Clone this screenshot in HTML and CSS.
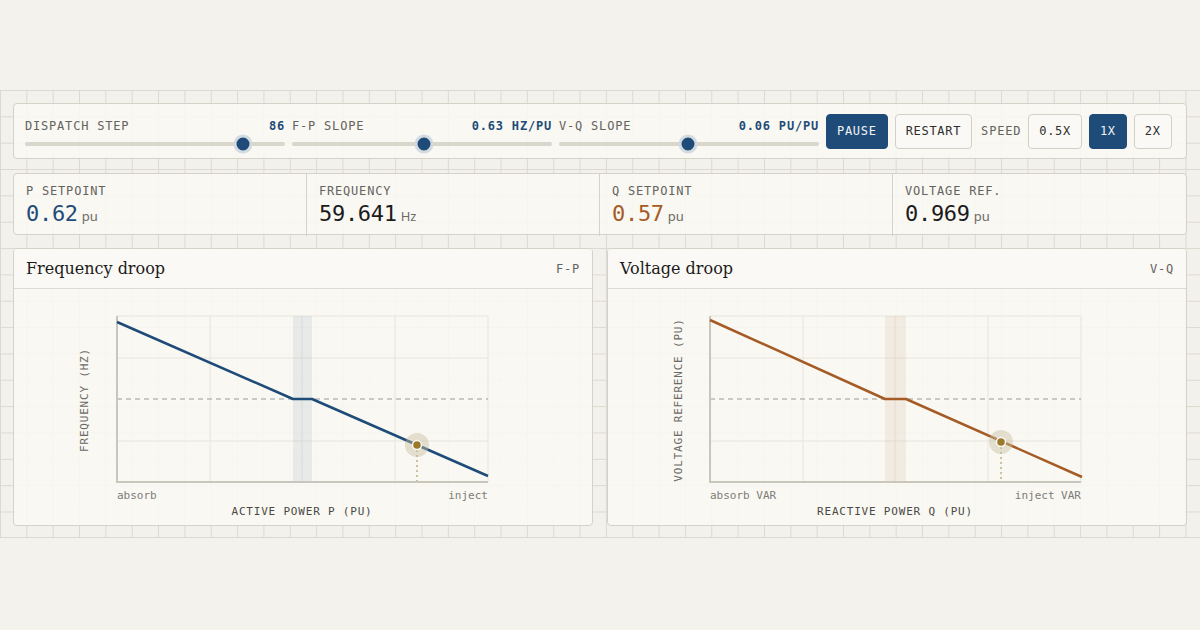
FILE: index.html
```html
<!DOCTYPE html>
<html lang="en">
<head>
    <meta charset="UTF-8">
    <meta name="viewport" content="width=device-width, initial-scale=1">
    <title>Droop Control Explorer</title>
    <link rel="stylesheet" href="styles.css">
</head>
<body>
    <div class="stage">
        <div class="panel controls">
            <div class="slider">
                <div class="slider-head">
                    <span class="label">Dispatch step</span>
                    <span class="slider-value">86</span>
                </div>
                <div class="track"><span class="thumb" style="left: 84%"></span></div>
            </div>
            <div class="slider">
                <div class="slider-head">
                    <span class="label">F-P slope</span>
                    <span class="slider-value">0.63 Hz/pu</span>
                </div>
                <div class="track"><span class="thumb" style="left: 50.8%"></span></div>
            </div>
            <div class="slider">
                <div class="slider-head">
                    <span class="label">V-Q slope</span>
                    <span class="slider-value">0.06 pu/pu</span>
                </div>
                <div class="track"><span class="thumb" style="left: 49.8%"></span></div>
            </div>
            <button class="btn primary">Pause</button>
            <button class="btn">Restart</button>
            <span class="label speed">Speed</span>
            <button class="btn">0.5x</button>
            <button class="btn primary">1x</button>
            <button class="btn">2x</button>
        </div>

        <div class="panel stats">
            <div class="stat">
                <div class="label">P setpoint</div>
                <div class="stat-value blue">0.62<span class="unit">pu</span></div>
            </div>
            <div class="stat">
                <div class="label">Frequency</div>
                <div class="stat-value">59.641<span class="unit">Hz</span></div>
            </div>
            <div class="stat">
                <div class="label">Q setpoint</div>
                <div class="stat-value orange">0.57<span class="unit">pu</span></div>
            </div>
            <div class="stat">
                <div class="label">Voltage ref.</div>
                <div class="stat-value">0.969<span class="unit">pu</span></div>
            </div>
        </div>

        <div class="charts">
            <div class="panel chart">
                <div class="chart-head">
                    <h2>Frequency droop</h2>
                    <span class="label">F-P</span>
                </div>
                <svg class="plot" viewBox="0 0 578 236" width="578" height="236">
                    <g class="gridlines">
                        <line x1="196" y1="27" x2="196" y2="193"/>
                        <line x1="288" y1="27" x2="288" y2="193"/>
                        <line x1="381" y1="27" x2="381" y2="193"/>
                        <line x1="474" y1="27" x2="474" y2="193"/>
                        <line x1="103" y1="27" x2="474" y2="27"/>
                        <line x1="103" y1="69" x2="474" y2="69"/>
                        <line x1="103" y1="152" x2="474" y2="152"/>
                    </g>
                    <rect class="band band-blue" x="279" y="27" width="19" height="166"/>
                    <line class="nominal" x1="103" y1="110" x2="474" y2="110"/>
                    <line class="axis" x1="103" y1="27" x2="103" y2="193"/>
                    <line class="axis" x1="102" y1="193" x2="474" y2="193"/>
                    <polyline class="curve curve-blue" points="103,33 279,110 298,110 474,187"/>
                    <line class="drop" x1="403" y1="156" x2="403" y2="192"/>
                    <circle class="halo" cx="403" cy="156" r="12"/>
                    <circle class="point" cx="403" cy="156" r="4.5"/>
                    <text class="axis-title" transform="translate(74 111) rotate(-90)" text-anchor="middle">FREQUENCY (HZ)</text>
                    <text class="tick" x="103" y="210">absorb</text>
                    <text class="tick" x="474" y="210" text-anchor="end">inject</text>
                    <text class="axis-title dark" x="288" y="226" text-anchor="middle">ACTIVE POWER P (PU)</text>
                </svg>
            </div>
            <div class="panel chart">
                <div class="chart-head">
                    <h2>Voltage droop</h2>
                    <span class="label">V-Q</span>
                </div>
                <svg class="plot" viewBox="0 0 577 236" width="577" height="236">
                    <g class="gridlines">
                        <line x1="195" y1="27" x2="195" y2="193"/>
                        <line x1="287" y1="27" x2="287" y2="193"/>
                        <line x1="380" y1="27" x2="380" y2="193"/>
                        <line x1="473" y1="27" x2="473" y2="193"/>
                        <line x1="102" y1="27" x2="473" y2="27"/>
                        <line x1="102" y1="69" x2="473" y2="69"/>
                        <line x1="102" y1="152" x2="473" y2="152"/>
                    </g>
                    <rect class="band band-orange" x="277" y="27" width="21" height="166"/>
                    <line class="nominal" x1="102" y1="110" x2="473" y2="110"/>
                    <line class="axis" x1="102" y1="27" x2="102" y2="193"/>
                    <line class="axis" x1="101" y1="193" x2="473" y2="193"/>
                    <polyline class="curve curve-orange" points="102,31 277,110 298,110 474,188"/>
                    <line class="drop" x1="393" y1="153" x2="393" y2="192"/>
                    <circle class="halo" cx="393" cy="153" r="12"/>
                    <circle class="point" cx="393" cy="153" r="4.5"/>
                    <text class="axis-title" transform="translate(74 111) rotate(-90)" text-anchor="middle">VOLTAGE REFERENCE (PU)</text>
                    <text class="tick" x="102" y="210">absorb VAR</text>
                    <text class="tick" x="473" y="210" text-anchor="end">inject VAR</text>
                    <text class="axis-title dark" x="287" y="226" text-anchor="middle">REACTIVE POWER Q (PU)</text>
                </svg>
            </div>
        </div>
    </div>
</body>
</html>
```

FILE: styles.css
```css
body {
    margin: 0;
    background: #f3f2ed;
    color: #1d1d1d;
    font-family: "DejaVu Sans Mono", "Liberation Mono", monospace;
}
.stage {
    margin-top: 90px;
    height: 448px;
    box-sizing: border-box;
    padding: 13px 13px 0 13px;
    display: flex;
    flex-direction: column;
    background-color: #f2f1eb;
    background-image:
        linear-gradient(to right, #dcd9cf 1px, transparent 1px),
        linear-gradient(to bottom, #dcd9cf 1px, transparent 1px);
    background-size: 26.35px 26.35px;
    border-bottom: 1px solid #dcd9cf;
}
.panel {
    background: rgba(250, 249, 245, 0.86);
    border: 1px solid #d5d2c8;
    border-radius: 4px;
}
.label {
    font-size: 12px;
    letter-spacing: 0.8px;
    text-transform: uppercase;
    color: #64635e;
}

/* control bar */
.controls {
    height: 56px;
    box-sizing: border-box;
    display: flex;
    align-items: center;
    gap: 7px;
    padding: 0 12px 0 11px;
}
.slider {
    flex: 0 0 260px;
    display: flex;
    flex-direction: column;
    gap: 9px;
    padding-top: 3px;
}
.slider-head {
    display: flex;
    justify-content: space-between;
    align-items: baseline;
}
.slider-value {
    font-size: 12px;
    font-weight: bold;
    letter-spacing: 0.8px;
    text-transform: uppercase;
    color: #1e4b78;
}
.track {
    position: relative;
    height: 4px;
    border-radius: 2px;
    background: #d9d6cb;
}
.thumb {
    position: absolute;
    top: 50%;
    width: 13px;
    height: 13px;
    border-radius: 50%;
    background: #1e4b78;
    border: 3px solid #d3dbe2;
    transform: translate(-50%, -50%);
}
.btn {
    height: 35px;
    padding: 0 10px;
    font-family: inherit;
    font-size: 12px;
    letter-spacing: 0.7px;
    text-transform: uppercase;
    color: #2e2e2c;
    background: #faf9f6;
    border: 1px solid #d3d0c6;
    border-radius: 4px;
}
.btn.primary {
    background: #1e4b78;
    border-color: #1e4b78;
    color: #f2f4f6;
}
.speed {
    margin-left: 2px;
}

/* readouts */
.stats {
    margin-top: 14px;
    height: 62px;
    box-sizing: border-box;
    display: grid;
    grid-template-columns: repeat(4, 1fr);
}
.stat {
    padding: 10px 12px;
    border-right: 1px solid #d5d2c8;
}
.stat:last-child {
    border-right: none;
}
.stat-value {
    margin-top: 3px;
    font-size: 22px;
    letter-spacing: -0.3px;
    color: #1b1b1b;
}
.stat-value.blue {
    color: #1e4b78;
}
.stat-value.orange {
    color: #a55b25;
}
.unit {
    margin-left: 4px;
    font-family: "Noto Sans", sans-serif;
    font-size: 13px;
    letter-spacing: 0;
    color: #6c6b66;
}

/* droop charts */
.charts {
    margin-top: 13px;
    display: flex;
    gap: 14px;
}
.chart {
    flex: 1;
    height: 278px;
    box-sizing: border-box;
}
.chart-head {
    height: 40px;
    box-sizing: border-box;
    display: flex;
    justify-content: space-between;
    align-items: center;
    padding: 0 12px 0 12px;
    border-bottom: 1px solid #dedbd2;
    background: rgba(251, 250, 247, 0.6);
}
.chart-head h2 {
    margin: 0;
    font-family: "DejaVu Serif", "Liberation Serif", serif;
    font-size: 16px;
    font-weight: normal;
    color: #1b1b1b;
}
.plot {
    display: block;
}
.gridlines line {
    stroke: #e8e5dc;
    stroke-width: 1;
}
.band-blue {
    fill: rgba(150, 170, 190, 0.18);
}
.band-orange {
    fill: rgba(200, 160, 135, 0.15);
}
.nominal {
    stroke: #9c9b96;
    stroke-width: 1;
    stroke-dasharray: 5 4;
}
.axis {
    stroke: #c9c6bc;
    stroke-width: 2;
}
.curve {
    fill: none;
    stroke-width: 2.5;
    stroke-linejoin: round;
}
.curve-blue {
    stroke: #1e4b78;
}
.curve-orange {
    stroke: #a55b25;
}
.drop {
    stroke: #a08a48;
    stroke-width: 1;
    stroke-dasharray: 2 3;
}
.halo {
    fill: rgba(200, 190, 160, 0.45);
}
.point {
    fill: #9b7a2b;
    stroke: #fbfaf6;
    stroke-width: 1.5;
}
.axis-title {
    font-family: "DejaVu Sans Mono", monospace;
    font-size: 11px;
    letter-spacing: 0.8px;
    fill: #6a6964;
}
.axis-title.dark {
    fill: #4a4946;
}
.tick {
    font-family: "DejaVu Sans Mono", monospace;
    font-size: 11px;
    fill: #7d7c77;
}
```
